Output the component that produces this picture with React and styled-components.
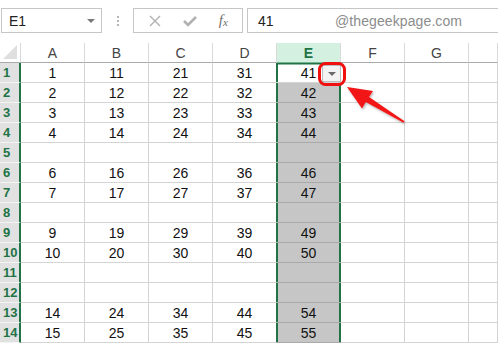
import React from "react";
import styled, { createGlobalStyle } from "styled-components";

const GREEN = "#217346";

const Global = createGlobalStyle`
  html, body {
    margin: 0;
    padding: 0;
    background: #ffffff;
    overflow: hidden;
  }
  body {
    font-family: "Liberation Sans", Arial, sans-serif;
  }
`;

const Stage = styled.div`
  position: relative;
  width: 498px;
  height: 345px;
  overflow: hidden;
  background: #ffffff;
`;

const Toolbar = styled.div`
  display: flex;
  align-items: flex-start;
  height: 43px;
  padding-top: 8px;
  box-sizing: border-box;
  padding-left: 1px;
`;

const NameBox = styled.div`
  width: 101px;
  height: 25px;
  box-sizing: border-box;
  border: 1px solid #c6c6c6;
  display: flex;
  align-items: center;
  justify-content: space-between;
  padding: 0 6px 0 7px;
  font-size: 14px;
  color: #222;
`;

const Caret = styled.span`
  width: 0;
  height: 0;
  border-left: 4px solid transparent;
  border-right: 4px solid transparent;
  border-top: 4px solid #7a7a7a;
`;

const Dots = styled.div`
  width: 31px;
  height: 25px;
  display: flex;
  flex-direction: column;
  align-items: center;
  justify-content: center;
  gap: 2px;
  span {
    width: 2px;
    height: 2px;
    background: #b5b5b5;
  }
`;

const Buttons = styled.div`
  width: 110px;
  height: 25px;
  box-sizing: border-box;
  border: 1px solid #c6c6c6;
  display: flex;
  align-items: center;
  justify-content: space-around;
  padding: 0 4px;
`;

const Fx = styled.span`
  font-family: "Liberation Serif", "Times New Roman", serif;
  font-style: italic;
  font-size: 15px;
  color: #707070;
  sub {
    font-size: 11px;
    vertical-align: -1px;
  }
`;

const Formula = styled.div`
  flex: 1;
  margin-left: 4px;
  height: 25px;
  box-sizing: border-box;
  border: 1px solid #c6c6c6;
  border-right: none;
  display: flex;
  align-items: center;
  padding-left: 10px;
  font-size: 14px;
  color: #222;
  position: relative;
`;

const Watermark = styled.span`
  position: absolute;
  left: 87px;
  top: 4px;
  font-size: 14px;
  color: #8c8c8c;
  letter-spacing: 0.1px;
`;

const Sheet = styled.div`
  display: grid;
  grid-template-columns: 21px repeat(7, 64px) 1fr;
  grid-auto-rows: 20px;
`;

const Corner = styled.div`
  position: relative;
  border-right: 1px solid #d8d8d8;
  border-bottom: 1px solid #ababab;
  &::after {
    content: "";
    position: absolute;
    right: 3px;
    bottom: 3px;
    border-left: 14px solid transparent;
    border-bottom: 14px solid #dfdfdf;
  }
`;

const ColHead = styled.div`
  box-sizing: border-box;
  display: flex;
  align-items: center;
  justify-content: center;
  font-size: 14px;
  color: ${(p) => (p.$active ? GREEN : "#444")};
  font-weight: ${(p) => (p.$active ? 700 : 400)};
  background: ${(p) => (p.$active ? "#d3f0e0" : "#ffffff")};
  border-right: 1px solid #dadada;
  border-bottom: 1px solid ${(p) => (p.$active ? "#d3f0e0" : "#ababab")};
`;

const RowHead = styled.div`
  box-sizing: border-box;
  display: flex;
  align-items: center;
  padding-left: 3px;
  font-size: 13px;
  font-weight: 700;
  color: ${GREEN};
  background: #e1e1e1;
  border-bottom: 1px solid #f4f4f4;
  border-right: 2px solid ${GREEN};
`;

const Cell = styled.div`
  position: relative;
  box-sizing: border-box;
  display: flex;
  align-items: center;
  justify-content: center;
  padding-top: 1px;
  font-size: 14px;
  color: #111;
  background: ${(p) => (p.$sel && !p.$active ? "#c6c6c6" : "#ffffff")};
  border-right: 1px solid #d4d4d4;
  border-bottom: 1px solid ${(p) => (p.$sel && !p.$active ? "#a9a9a9" : "#d4d4d4")};
  ${(p) =>
    p.$sel &&
    `
    border-right: none;
    box-shadow: inset 2px 0 0 ${GREEN}, inset -2px 0 0 ${GREEN};
    margin-left: -1px;
    `}
`;

const Filter = styled.div`
  position: absolute;
  right: 0;
  top: 2px;
  width: 19px;
  height: 17px;
  box-sizing: border-box;
  background: #f3f3f3;
  border: 1px solid #bdbdbd;
  display: flex;
  align-items: center;
  justify-content: center;
  &::after {
    content: "";
    border-left: 4px solid transparent;
    border-right: 4px solid transparent;
    border-top: 4px solid #6a6a6a;
  }
`;

const Overlay = styled.svg`
  position: absolute;
  left: 0;
  top: 0;
  pointer-events: none;
`;

const columns = ["A", "B", "C", "D", "E", "F", "G", "H"];
const base = [1, 2, 3, 4, null, 6, 7, null, 9, 10, null, null, 14, 15];

const App = () => {
  return (
    <Stage>
      <Global />
      <Toolbar>
        <NameBox>
          E1
          <Caret />
        </NameBox>
        <Dots>
          <span />
          <span />
          <span />
        </Dots>
        <Buttons>
          <svg width="14" height="14" viewBox="0 0 14 14">
            <path d="M2 2 L12 12 M12 2 L2 12" stroke="#b0b0b0" strokeWidth="1.4" />
          </svg>
          <svg width="16" height="14" viewBox="0 0 16 14">
            <path d="M2 7 L6 11 L14 3" stroke="#b0b0b0" strokeWidth="2.6" fill="none" />
          </svg>
          <Fx>
            f<sub>x</sub>
          </Fx>
        </Buttons>
        <Formula>
          41
          <Watermark>@thegeekpage.com</Watermark>
        </Formula>
      </Toolbar>

      <Sheet>
        <Corner />
        {columns.map((c) => (
          <ColHead key={c} $active={c === "E"}>
            {c === "H" ? "" : c}
          </ColHead>
        ))}
        {base.map((v, i) => (
          <React.Fragment key={i}>
            <RowHead>{i + 1}</RowHead>
            {columns.map((c, ci) => {
              const sel = c === "E";
              const value = v !== null && ci < 5 ? v + ci * 10 : "";
              return (
                <Cell key={c} $sel={sel} $active={sel && i === 0}>
                  {value}
                  {sel && i === 0 && <Filter />}
                </Cell>
              );
            })}
          </React.Fragment>
        ))}
      </Sheet>

      <Overlay width="498" height="345" viewBox="0 0 498 345">
        <defs>
          <filter id="shadow" x="-20%" y="-20%" width="140%" height="140%">
            <feDropShadow dx="1" dy="1.5" stdDeviation="1" floodColor="#000" floodOpacity="0.3" />
          </filter>
        </defs>
        <line x1="277" y1="63.5" x2="341" y2="63.5" stroke={GREEN} strokeWidth="2" />
        <rect x="319.5" y="63.5" width="25" height="21" rx="6" fill="none" stroke="#f01010" strokeWidth="3" />
        <polygon
          points="347,87 373,91 369,97 404.5,121.2 403.5,122.8 365.8,102 362,108.5"
          fill="#f21414"
          filter="url(#shadow)"
        />
      </Overlay>
    </Stage>
  );
};

export default App;
